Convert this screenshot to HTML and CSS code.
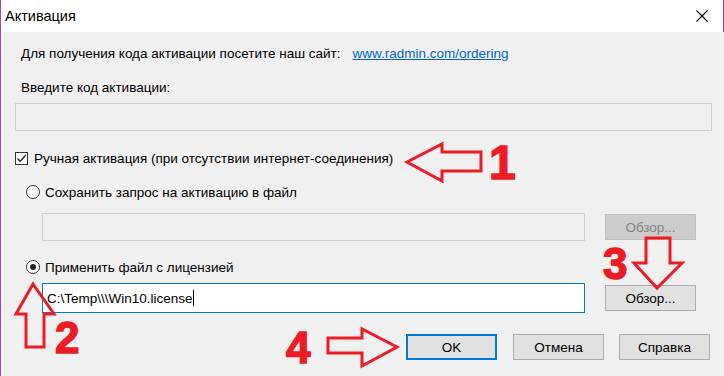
FILE: index.html
```html
<!DOCTYPE html>
<html lang="ru">
<head>
    <meta charset="UTF-8">
    <title>Активация</title>
    <link rel="stylesheet" href="styles.css">
</head>
<body>

<div class="window">
    <div class="titlebar">
        <span class="title">Активация</span>
        <span class="close">
            <svg width="12" height="12" viewBox="0 0 12 12"><path d="M0.5 0.5 L11.5 11.5 M11.5 0.5 L0.5 11.5" stroke="#000" stroke-width="1.1" fill="none"/></svg>
        </span>
    </div>

    <div class="content">
        <div class="row info">
            <span>Для получения кода активации посетите наш сайт:</span>
            <a class="link" href="#">www.radmin.com/ordering</a>
        </div>

        <div class="row label-code">Введите код активации:</div>
        <div class="field wide disabled"></div>

        <div class="row check-row">
            <span class="checkbox">
                <svg width="11" height="11" viewBox="0 0 11 11"><path d="M1.5 5.5 L4.2 8.3 L9.6 2.2" stroke="#222" stroke-width="1.3" fill="none"/></svg>
            </span>
            <span>Ручная активация (при отсутствии интернет-соединения)</span>
        </div>

        <div class="row radio-row">
            <span class="radio"></span>
            <span>Сохранить запрос на активацию в файл</span>
        </div>

        <div class="file-row first">
            <div class="field path disabled"></div>
            <button class="btn off">Обзор...</button>
        </div>

        <div class="row radio-row second">
            <span class="radio on"></span>
            <span>Применить файл с лицензией</span>
        </div>

        <div class="file-row">
            <div class="field path focus">C:\Temp\\\Win10.license<span class="caret"></span></div>
            <button class="btn">Обзор...</button>
        </div>

        <div class="actions">
            <button class="btn default">OK</button>
            <button class="btn">Отмена</button>
            <button class="btn">Справка</button>
        </div>
    </div>

    <!-- red hand-drawn marks on top of the dialog -->
    <svg class="marks" width="724" height="376" viewBox="0 0 724 376">
        <g fill="none" stroke="#ed1c24" stroke-width="3" stroke-linejoin="miter">
            <polygon points="407,162 442,144 442,152 481,152 481,171 442,171 442,181"/>
            <polygon points="33,284 54,314 44,314 44,347 26,347 26,314 16,314"/>
            <polygon points="646,238 670,238 670,263 682,263 657,288 634,263 646,263"/>
            <polygon points="328,338 362,338 362,329 397,347 362,366 362,353 328,353"/>
        </g>
        <g class="digits">
            <text x="489" y="179" font-size="48">1</text>
            <text x="55" y="353" font-size="44">2</text>
            <text x="603" y="279" font-size="44">3</text>
            <text x="286" y="363" font-size="44">4</text>
        </g>
    </svg>
</div>

</body>
</html>
```

FILE: styles.css
```css
* {
    box-sizing: border-box;
}

body {
    margin: 0;
    font-family: "Liberation Sans", Arial, sans-serif;
    font-size: 13.5px;
    color: #000;
}

.window {
    position: relative;
    width: 724px;
    height: 376px;
    background-color: #f0f0f0;
    border-left: 1px solid #9d43b3;
    overflow: hidden;
}

.titlebar {
    height: 32px;
    background-color: #fff;
    border-right: 1px solid #9d43b3;
    display: flex;
    align-items: center;
    justify-content: space-between;
    padding-left: 4px;
}

.title {
    font-size: 14.5px;
}

.close {
    width: 40px;
    height: 32px;
    display: flex;
    align-items: center;
    justify-content: center;
    margin-right: 1px;
}

.content {
    padding: 12px 12px 0 14px;
}

.row {
    height: 18px;
    display: flex;
    align-items: center;
}

.info {
    padding-left: 6px;
    gap: 12px;
}

.link {
    color: #0066cc;
    text-decoration: underline;
}

.label-code {
    margin-top: 16px;
    padding-left: 6px;
}

.field {
    height: 28px;
    border: 1px solid #d0d0d0;
    background-color: #f0f0f0;
}

.field.wide {
    width: 697px;
    margin-top: 7px;
}

.check-row {
    margin-top: 18px;
    gap: 6px;
}

.checkbox {
    width: 13px;
    height: 13px;
    border: 1px solid #333;
    background: #fff;
    display: flex;
    align-items: center;
    justify-content: center;
}

.radio-row {
    margin-top: 16px;
    padding-left: 11px;
    gap: 5px;
}

.radio-row.second {
    margin-top: 17px;
}

.radio {
    width: 14px;
    height: 14px;
    border: 1px solid #333;
    border-radius: 50%;
    background: #fff;
    display: flex;
    align-items: center;
    justify-content: center;
}

.radio.on::after {
    content: '';
    width: 6px;
    height: 6px;
    border-radius: 50%;
    background: #222;
}

.file-row {
    display: flex;
    align-items: center;
    gap: 20px;
    padding-left: 27px;
    margin-top: 7px;
}

.file-row.first {
    margin-top: 12px;
}

.field.path {
    width: 543px;
}

.field.focus {
    height: 30px;
    border-color: #0078d7;
    background-color: #fff;
    display: flex;
    align-items: center;
    padding-left: 4px;
}

.caret {
    width: 1px;
    height: 16px;
    background: #000;
}

.btn {
    width: 91px;
    height: 26px;
    font-family: inherit;
    font-size: 13.5px;
    color: #000;
    background-color: #e1e1e1;
    border: 1px solid #adadad;
    padding: 0;
}

.btn.off {
    color: #838383;
    background-color: #cccccc;
    border-color: #bfbfbf;
}

.btn.default {
    border: 2px solid #0078d7;
}

.actions {
    display: flex;
    justify-content: flex-end;
    gap: 15px;
    margin-top: 21px;
    padding-right: 2px;
}

.actions .btn:first-child {
    margin-right: 1px;
}

.marks {
    position: absolute;
    left: -1px;
    top: 0;
    pointer-events: none;
}

.digits text {
    fill: #ed1c24;
    stroke: #ed1c24;
    stroke-width: 1.5px;
    font-family: "Liberation Sans", Arial, sans-serif;
    font-weight: bold;
}
```
